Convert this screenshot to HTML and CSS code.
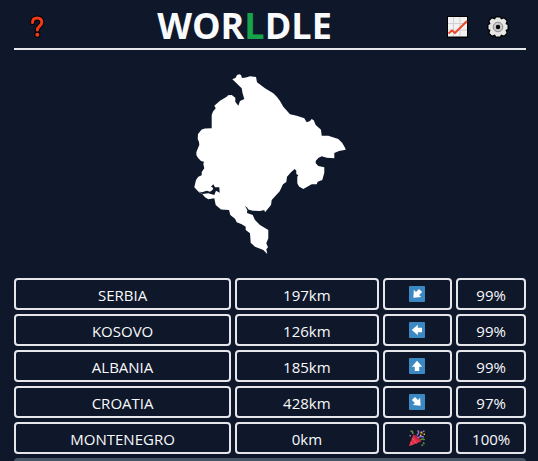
FILE: index.html
```html
<!DOCTYPE html>
<html lang="en">
<head>
<meta charset="utf-8">
<title>Worldle</title>
<link rel="stylesheet" href="styles.css">
</head>
<body>
<div class="app">
  <header class="header">
    <div class="tools tools-left">
      <button class="icon-button" type="button">
        <svg class="icon" viewBox="0 0 20 22" aria-hidden="true">
          <path d="M5.500 6.500C5.500 3 7.400 2 10.300 2C13.500 2 14.800 4 14.800 6.500C14.800 9.800 10.300 10.300 10.300 14" fill="none" stroke="#000" stroke-width="5" stroke-linecap="round"/>
          <circle cx="10.300" cy="18.700" r="3" fill="#000"/>
          <path d="M5.500 6.500C5.500 3 7.400 2 10.300 2C13.500 2 14.800 4 14.800 6.500C14.800 9.800 10.300 10.300 10.300 14" fill="none" stroke="#f03a17" stroke-width="3" stroke-linecap="round"/>
          <circle cx="10.300" cy="18.700" r="2" fill="#f03a17"/>
        </svg>
      </button>
    </div>
    <h1 class="title">WOR<span class="accent">L</span>DLE</h1>
    <div class="tools tools-right">
      <button class="icon-button" type="button">
        <svg class="icon" viewBox="0 0 20 22" aria-hidden="true">
          <path d="M0 0H21V22H0z" fill="#000"/>
          <path d="M1 1H20V20.500H1z" fill="#f2f2f2"/>
          <path d="M6.500 1V20M13 1V20M1 7.500H20M1 14H20" stroke="#d0d0d0" stroke-width="1"/>
          <path d="M1.500 17.500L5 14.500L8 17L20 5" fill="none" stroke="#ee4425" stroke-width="2"/>
        </svg>
      </button>
      <button class="icon-button" type="button">
        <svg class="icon" viewBox="0 0 20 22" aria-hidden="true">
          <g transform="translate(10 11)">
            <path d="M-2 -9.500H2L3 -7.500L6 -8.500L8.500 -6L7.500 -3L9.500 -2V2L7.500 3L8.500 6L6 8.500L3 7.500L2 9.500H-2L-3 7.500L-6 8.500L-8.500 6L-7.500 3L-9.500 2V-2L-7.500 -3L-8.500 -6L-6 -8.500L-3 -7.500z" fill="#e6e6e6" stroke="#000" stroke-width="2.500" stroke-linejoin="round" paint-order="stroke"/>
            <circle r="4.800" fill="#c8c8c8" stroke="#8c8c8c" stroke-width="1"/>
            <circle r="2.200" fill="#000"/>
          </g>
        </svg>
      </button>
    </div>
  </header>

  <main class="game">
    <svg class="country" viewBox="180 64 180 200" aria-hidden="true">
      <path fill="#fff" d="M239.300 74.300L241 75L242 78L246 77.500L250 76.300L256 77L257 82.300L265 88.300L273.300 93.300L277 97L280 101L283.300 106.700L290 114.300L296.700 115.700L304.300 118.300L306.700 122.300L310 121L311.700 119L313.700 120.300L315.700 125L321 129.700L321.700 135.700L328.300 135.700L338.300 139L342.300 143L345 147.700L345.700 149.700L339 151L334.300 153V158.300L326.700 157.700L321.700 156.300L318.300 158L315.700 161V163.300L318.300 166L324.300 167.300V172.700L322.300 180L317.700 181.700L316.700 184.300H311.700L303.300 189L299 186.500L297.300 183.300V176.700L298.300 175.300L296.300 174V170.700L294.700 169L291 172.300L287 176.700L286.300 182L283 184.300L279.700 191.300L271.700 200L271 205L265 212.300L264.300 210L260 211L252.700 210.700L248.300 209.500L247.300 207.700L245 206L247.300 210L247 213L252.700 215L255 220L260 225L268.300 230V238.300L266.300 243.300L268 247.300L266.300 249.300L267.300 254L263.300 250L255 246.700L250.700 242.700L250 233.300L245.700 230V226.700L241.700 224.300L236.700 222.300L235 218.700L230.300 215L229 210L221 209.500L215.700 205L214.300 198.300L208.300 199.300L205 197.300L202.300 194L199 192.300L194.300 187.300L196 180L198.300 176.700L201.700 175.300V172L204.300 168.300L203.300 164L204 161.700L201 161L198.300 158.300L196.500 155.500L196.300 152.300L198 148L199.300 145L199 142L197.700 139L198 134L201.700 129.500L205 128.500L211.700 128.300V115L213 111.500L215.700 108.300L214.300 105.700L220 100.700L226.700 96.700L228 95.200L231.700 95L235.300 97.700L235.300 101.700L238.300 105.700L240 101L244.300 99L242.500 93L241.700 88.300L238.300 85L235 81.700L232.300 79.300L235.700 77.800L237 75z"/>
      <path fill="#0f172a" d="M199 191.500L202 192.300L206.700 190.700L210 191.700L212.500 190L213.300 188L211 186.700L213.300 184.300L215 187.300H219.300L219.700 192.700L216 190.700L214.300 195L208.300 193.300L202.500 194z"/>
    </svg>

    <div class="guesses">
      <div class="guess">
        <div class="cell">SERBIA</div><div class="cell">197km</div>
        <div class="cell"><svg class="mark" viewBox="0 0 16 16"><use href="#arrow-tile"/><use href="#arrow" transform="rotate(225 8 8)"/></svg></div>
        <div class="cell">99%</div>
      </div>
      <div class="guess">
        <div class="cell">KOSOVO</div><div class="cell">126km</div>
        <div class="cell"><svg class="mark" viewBox="0 0 16 16"><use href="#arrow-tile"/><use href="#arrow" transform="rotate(270 8 8)"/></svg></div>
        <div class="cell">99%</div>
      </div>
      <div class="guess">
        <div class="cell">ALBANIA</div><div class="cell">185km</div>
        <div class="cell"><svg class="mark" viewBox="0 0 16 16"><use href="#arrow-tile"/><use href="#arrow"/></svg></div>
        <div class="cell">99%</div>
      </div>
      <div class="guess">
        <div class="cell">CROATIA</div><div class="cell">428km</div>
        <div class="cell"><svg class="mark" viewBox="0 0 16 16"><use href="#arrow-tile"/><use href="#arrow" transform="rotate(135 8 8)"/></svg></div>
        <div class="cell">97%</div>
      </div>
      <div class="guess">
        <div class="cell">MONTENEGRO</div><div class="cell">0km</div>
        <div class="cell">
          <svg class="mark" viewBox="0 0 16 16">
            <path d="M4.500 4.500L0 15.500Q0 16.300 1 16L12 11.500Q11 7.500 4.500 4.500z" fill="#dd2e44"/>
            <path d="M4.500 4.500Q6 9.500 12 11.500Q11.500 7 4.500 4.500z" fill="#b8233c"/>
            <path d="M3 8L7.500 13.500M1.500 12L3.500 15" stroke="#ef5a6e" stroke-width="1"/>
            <path d="M1.500 1Q4.500 1 3.500 4M11.500 10Q14 8 15.500 10" fill="none" stroke="#5c913b" stroke-width="1.600"/>
            <path d="M8.500 .5Q11 2 8 5.500M8.500 8Q11 5.500 15 7" fill="none" stroke="#9270ca" stroke-width="1.600"/>
            <path d="M14 12.500L15.500 14M12.500 14.500L14 16" stroke="#5c913b" stroke-width="1.500"/>
            <path d="M11.500 1.500H13.500V3.500H11.500zM14.500 3.500H16V5H14.500zM11 4.500H12.500V6H11z" fill="#e8b83c"/>
            <path d="M14 .5H15.500V2H14zM.5 5H2V6.500H.5z" fill="#9270ca"/>
          </svg>
        </div>
        <div class="cell">100%</div>
      </div>
    </div>
    <div class="panel"></div>
  </main>
</div>
<svg class="symbols" aria-hidden="true">
  <defs>
    <rect id="arrow-tile" width="16" height="16" rx="1" fill="#3b88c3"/>
    <path id="arrow" d="M8 2.800L13.200 8.800H10.200V13H5.800V8.800H2.800z" fill="#fff"/>
  </defs>
</svg>
</body>
</html>
```
FILE: styles.css
```css
* {
  box-sizing: border-box;
}

body {
  margin: 0;
  height: 100vh;
  overflow: hidden;
  background: #0f172a;
  color: #f8fafc;
  font: 15px/24px "Open Sans", "Noto Sans", sans-serif;
}

.app {
  padding: 0 12px 0 14px;
}

.header {
  display: flex;
  align-items: center;
  height: 50px;
  padding-top: 4px;
  border-bottom: 2px solid #e5e7eb;
}

.tools {
  display: flex;
  padding-top: 2px;
}

.tools-left {
  padding-left: 13px;
  padding-right: 13px;
}

.tools-right {
  gap: 21px;
  padding-left: 18px;
  padding-right: 18px;
}

.icon-button {
  display: flex;
  padding: 0;
  border: 0;
  background: none;
  cursor: pointer;
}

.icon {
  width: 20px;
  height: 22px;
  overflow: visible;
}

.title {
  flex: 1;
  margin: 0;
  font-size: 36px;
  line-height: 44px;
  font-weight: 700;
  text-align: center;
}

.accent {
  color: #16a34a;
}

.country {
  display: block;
  width: 180px;
  height: 200px;
  margin: 14px auto;
}

.guesses {
  display: grid;
  gap: 4px;
}

.guess {
  display: grid;
  grid-template-columns: repeat(7, 1fr);
  gap: 4px;
}

.cell {
  display: flex;
  align-items: center;
  justify-content: center;
  height: 32px;
  padding-top: 2px;
  border: 2px solid #e5e7eb;
  border-radius: 4px;
}

.cell:nth-child(1) {
  grid-column: span 3;
}

.cell:nth-child(2) {
  grid-column: span 2;
}

.cell:nth-child(3) {
  padding-top: 0;
}

.mark {
  width: 16px;
  height: 16px;
}

.panel {
  height: 32px;
  margin-top: 4px;
  border-radius: 4px;
  background: #475569;
}

.symbols {
  display: block;
  width: 0;
  height: 0;
}
```
